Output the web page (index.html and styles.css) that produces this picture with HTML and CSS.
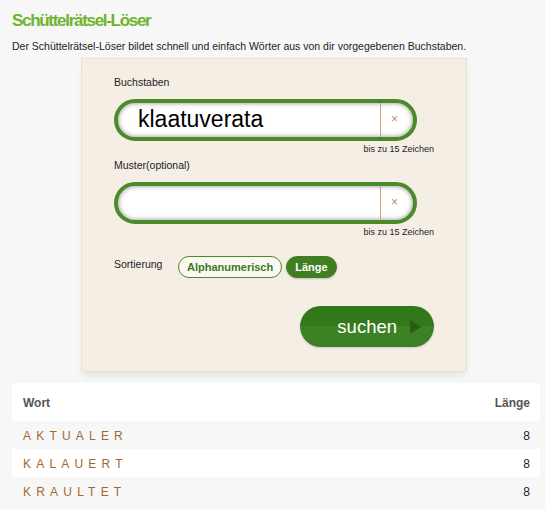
FILE: index.html
```html
<!DOCTYPE html>
<html lang="de">
<head>
  <meta charset="UTF-8" />
  <meta name="viewport" content="width=device-width, initial-scale=1.0"/>
  <title>Schüttelrätsel-Löser</title>
  <link rel="stylesheet" href="styles.css">
</head>
<body>
  <h1>Schüttelrätsel-Löser</h1>
  <p class="intro">Der Schüttelrätsel-Löser bildet schnell und einfach Wörter aus von dir vorgegebenen Buchstaben.</p>

  <!-- Search form -->
  <div class="panel">
    <label class="field-label" for="letters">Buchstaben</label>
    <div class="field">
      <div class="input-wrap">
        <input type="text" id="letters" value="klaatuverata">
        <span class="clear">×</span>
      </div>
      <div class="hint">bis zu 15 Zeichen</div>
    </div>

    <label class="field-label" for="pattern">Muster(optional)</label>
    <div class="field">
      <div class="input-wrap">
        <input type="text" id="pattern" value="">
        <span class="clear">×</span>
      </div>
      <div class="hint">bis zu 15 Zeichen</div>
    </div>

    <div class="sort-row">
      <span class="sort-label">Sortierung</span>
      <button class="pill">Alphanumerisch</button>
      <button class="pill active">Länge</button>
    </div>

    <div class="submit-row">
      <button class="search-btn">suchen <span class="arrow"></span></button>
    </div>
  </div>

  <!-- Results -->
  <table class="results">
    <thead>
      <tr><th>Wort</th><th class="num">Länge</th></tr>
    </thead>
    <tbody>
      <tr><td class="word">AKTUALER</td><td class="num">8</td></tr>
      <tr><td class="word">KALAUERT</td><td class="num">8</td></tr>
      <tr><td class="word">KRAULTET</td><td class="num">8</td></tr>
    </tbody>
  </table>
</body>
</html>
```

FILE: styles.css
```css
body {
  font-family: 'Liberation Sans', Arial, sans-serif;
  background-color: #f7f7f7;
  color: #222;
  margin: 0;
  padding: 10px 5px 0 12px;
  overflow: hidden;
}
h1 {
  font-size: 17px;
  line-height: 22px;
  margin: 0;
  color: #6cb52d;
  letter-spacing: -1.3px;
}
.intro {
  font-size: 10.5px;
  line-height: 14px;
  margin: 7px 0 0;
  color: #222;
}
.panel {
  width: 352px;
  margin: 5px 0 0 69px;
  padding: 16px 0 24px 32px;
  background-color: #f5eee5;
  border: 1px solid #e8e1d8;
  box-shadow: 0 6px 8px -2px rgba(0, 0, 0, 0.08);
}
.field-label {
  display: block;
  font-size: 10.5px;
  line-height: 14px;
  color: #222;
  margin-bottom: 10px;
}
.field {
  width: 320px;
  margin-bottom: 3px;
}
.input-wrap {
  position: relative;
  width: 303px;
  height: 42px;
  box-sizing: border-box;
  border: 4px solid #4b8a2a;
  border-radius: 21px;
  background-color: #fff;
  box-shadow: inset 0 0 5px rgba(0, 0, 0, 0.45);
}
.input-wrap input {
  width: 263px;
  height: 34px;
  box-sizing: border-box;
  border: none;
  border-right: 1px solid #c9a27e;
  background: transparent;
  padding: 0 0 1px 20px;
  margin: 0;
  font-family: 'Liberation Sans', Arial, sans-serif;
  font-size: 23px;
  color: #000;
  outline: none;
  vertical-align: top;
}
.clear {
  position: absolute;
  right: 15px;
  top: 9px;
  font-size: 12px;
  color: #c88a5c;
}
.hint {
  text-align: right;
  font-size: 9px;
  line-height: 12px;
  margin-top: 2px;
  color: #222;
}
.sort-row {
  display: flex;
  align-items: center;
  gap: 4px;
  margin-top: 18px;
}
.sort-label {
  font-size: 10.5px;
  color: #222;
  width: 60px;
  margin-top: -6px;
}
.pill {
  font-family: 'Liberation Sans', Arial, sans-serif;
  font-size: 11px;
  font-weight: bold;
  height: 22px;
  padding: 0 8px;
  border-radius: 11px;
  border: 1px solid #4b8a2a;
  background-color: #fbf8f2;
  color: #3b7a1e;
  cursor: pointer;
}
.pill.active {
  background-color: #3f7f22;
  border-color: #3f7f22;
  color: #fff;
  box-shadow: 0 1px 2px rgba(0, 0, 0, 0.2);
}
.submit-row {
  display: flex;
  justify-content: flex-end;
  width: 320px;
  margin-top: 28px;
}
.search-btn {
  display: flex;
  align-items: center;
  justify-content: flex-end;
  gap: 13px;
  width: 134px;
  height: 41px;
  padding: 0 13px 0 0;
  border: none;
  border-radius: 21px;
  background: linear-gradient(#2f7819 0%, #33791c 48%, #3c8224 50%, #3b8123 100%);
  color: #fff;
  font-family: 'Liberation Sans', Arial, sans-serif;
  font-size: 18.5px;
  cursor: pointer;
  box-shadow: 0 1px 2px rgba(0, 0, 0, 0.15);
}
.arrow {
  width: 0;
  height: 0;
  border-top: 7px solid transparent;
  border-bottom: 7px solid transparent;
  border-left: 11px solid #2a5c12;
}
.results {
  width: 528px;
  margin-top: 11px;
  border-collapse: collapse;
  font-size: 12px;
}
.results thead tr {
  height: 38px;
}
.results tbody tr {
  height: 28px;
}
.results th {
  background-color: #fff;
  color: #555;
  text-align: left;
  font-weight: bold;
  padding: 2px 11px 0;
}
.results th.num {
  text-align: right;
  padding-right: 10px;
}
.results td {
  padding: 2px 11px 0;
}
.results tbody tr:nth-child(even) td {
  background-color: #fff;
}
.results td.word {
  color: #a3672d;
  letter-spacing: 5.2px;
}
.results td.num {
  text-align: right;
  color: #222;
  padding-right: 10px;
}
```
